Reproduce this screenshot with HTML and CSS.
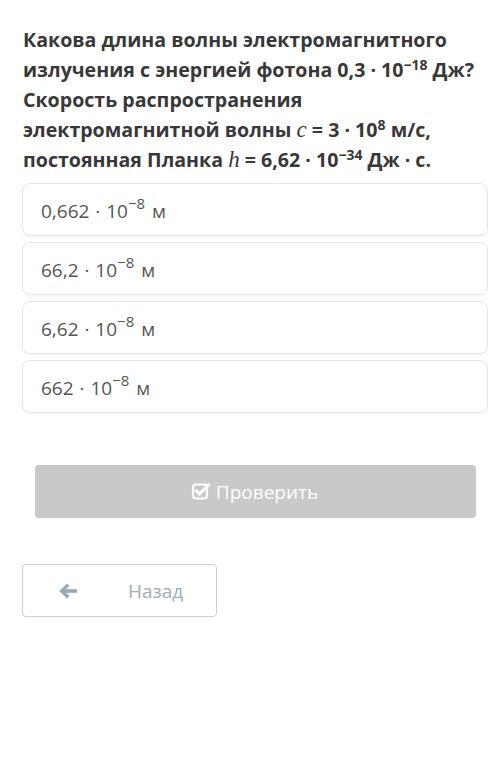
FILE: index.html
```html
<!DOCTYPE html>
<html lang="ru">
<head>
<meta charset="utf-8">
<link rel="stylesheet" href="styles.css">
</head>
<body>
<div class="page">
  <div class="question">Какова длина волны электромагнитного излучения с энергией фотона 0,3&nbsp;·&nbsp;10<sup>−18</sup>&nbsp;Дж? Скорость распространения электромагнитной волны <span class="math">c</span> = 3&nbsp;·&nbsp;10<sup>8</sup>&nbsp;м/с, постоянная Планка <span class="math">h</span> = 6,62&nbsp;·&nbsp;10<sup>−34</sup> Дж&nbsp;·&nbsp;с.</div>
  <div class="options">
    <div class="option"><span class="opt-text">0,662 · 10<sup class="exp">−8</sup> м</span></div>
    <div class="option"><span class="opt-text">66,2 · 10<sup class="exp">−8</sup> м</span></div>
    <div class="option"><span class="opt-text">6,62 · 10<sup class="exp">−8</sup> м</span></div>
    <div class="option"><span class="opt-text">662 · 10<sup class="exp">−8</sup> м</span></div>
  </div>
  <div class="check">
    <svg class="check-icon" viewBox="0 0 20 20" width="20" height="20">
      <rect x="2" y="3.5" width="14" height="14" rx="3" fill="none" stroke="#fff" stroke-width="2.2"/>
      <path d="M5.5 10 L8.6 13 L17.5 4" fill="none" stroke="#fff" stroke-width="3" stroke-linecap="square"/>
    </svg>
    <span>Проверить</span>
  </div>
  <div class="back">
    <svg class="back-icon" viewBox="0 0 20 20" width="20" height="20">
      <path d="M1.5 10 L9 3 L11 5 L7.2 8.4 H18.5 V11.6 H7.2 L11 15 L9 17 Z" fill="#9aa9b8" stroke="#9aa9b8" stroke-width="0.8" stroke-linejoin="round"/>
    </svg>
    <span class="back-label">Назад</span>
  </div>
</div>
</body>
</html>
```
FILE: styles.css
```css
html, body {
  margin: 0;
  padding: 0;
  background: #ffffff;
}
.page {
  width: 466px;
  padding: 25px 12px 0 22px;
  font-family: "Open Sans", "Noto Sans", sans-serif;
}
.question {
  font-size: 19.6px;
  font-weight: 700;
  line-height: 30px;
  color: #383838;
  padding-left: 1px;
}
.question sup {
  font-size: 14px;
  line-height: 0;
  vertical-align: 7px;
}
.math {
  font-family: "Liberation Serif", serif;
  font-style: italic;
  font-weight: 400;
  font-size: 23px;
}
.options {
  margin-top: 8px;
  display: flex;
  flex-direction: column;
  gap: 6px;
}
.option {
  box-sizing: border-box;
  height: 53px;
  border: 1px solid #e6e6e6;
  border-radius: 8px;
  box-shadow: 0 1px 2px rgba(0,0,0,0.05);
  padding-left: 18px;
  display: flex;
  align-items: center;
  font-size: 19px;
  color: #555555;
  word-spacing: 1px;
}
.opt-text {
  display: block;
  line-height: 26px;
  padding-top: 2px;
}
.exp {
  font-size: 15px;
  line-height: 0;
  vertical-align: 9px;
  margin-right: 1px;
}
.check {
  margin: 52px 12px 0 13px;
  height: 53px;
  background: #c9c9c9;
  border-radius: 4px;
  display: flex;
  align-items: center;
  justify-content: center;
  gap: 5px;
  color: #ffffff;
  font-size: 19px;
  padding-right: 2px;
}
.check-icon {
  display: block;
  margin-top: -1px;
}
.back {
  box-sizing: border-box;
  margin-top: 46px;
  width: 195px;
  height: 53px;
  border: 1px solid #cfcfcf;
  border-radius: 4px;
  display: flex;
  align-items: center;
  padding-left: 35px;
  font-size: 19px;
  color: #a4acb4;
}
.back-icon {
  display: block;
}
.back-label {
  margin-left: 50px;
}
```
